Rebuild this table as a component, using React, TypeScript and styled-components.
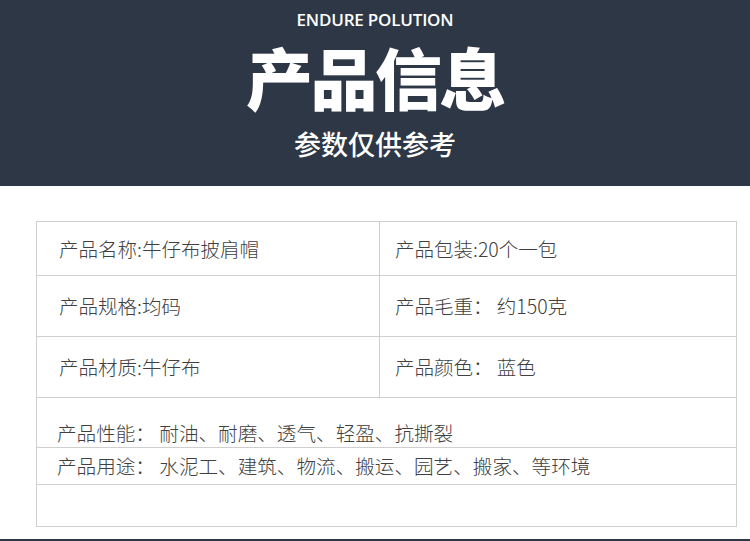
import React from "react";
import styled, { createGlobalStyle } from "styled-components";

const Global = createGlobalStyle`
  html, body { margin: 0; padding: 0; background: #ffffff; }
  body { font-family: "Noto Sans CJK SC", "Noto Sans", sans-serif; }
`;

const Page = styled.div`
  width: 750px;
  height: 541px;
  overflow: hidden;
  display: flex;
  flex-direction: column;
`;

const Header = styled.header`
  height: 186px;
  background: #2d3745;
  color: #ffffff;
  display: flex;
  flex-direction: column;
  align-items: center;
`;

const Eyebrow = styled.div`
  margin-top: 8px;
  font-family: "Open Sans", "Noto Sans", sans-serif;
  font-size: 17px;
  font-weight: 600;
  line-height: 24px;
  letter-spacing: -0.2px;
`;

const Title = styled.h1`
  margin: 10px 0 0;
  font-family: "Noto Sans CJK SC", sans-serif;
  font-size: 67px;
  font-weight: 900;
  line-height: 68px;
  letter-spacing: -2.5px;
`;

const Subtitle = styled.div`
  margin-top: 16px;
  font-family: "Noto Sans CJK SC", sans-serif;
  font-size: 27px;
  font-weight: 500;
  line-height: 36px;
`;

const Table = styled.div`
  margin: 35px 0 0 36px;
  width: 701px;
  box-sizing: border-box;
  border: 1px solid #cfcfcf;
  display: flex;
  flex-direction: column;
  color: #404040;
  font-weight: 300;
`;

const Row = styled.div<{ $h: number; $align?: string }>`
  height: ${(p) => p.$h}px;
  display: flex;
  align-items: ${(p) => p.$align || "center"};
  & + & { border-top: 1px solid #cfcfcf; }
`;

const Cell = styled.div<{ $w?: number; $pl: number }>`
  ${(p) => (p.$w ? `width: ${p.$w}px; flex: none;` : "flex: 1;")}
  height: 100%;
  box-sizing: border-box;
  display: flex;
  align-items: inherit;
  padding-left: ${(p) => p.$pl}px;
  font-size: 19.5px;
  line-height: 26px;
  white-space: pre;
  & + & { border-left: 1px solid #cfcfcf; }
`;

const Wide = styled.div<{ $pb?: number }>`
  flex: 1;
  padding-left: 20px;
  padding-bottom: ${(p) => p.$pb || 0}px;
  font-size: 19.6px;
  line-height: 26px;
  white-space: pre;
`;

const Footer = styled.div`
  margin-top: auto;
  height: 2px;
  background: #2d3745;
`;

const pairs: [string, string][] = [
  ["产品名称:牛仔布披肩帽", "产品包装:20个一包"],
  ["产品规格:均码", "产品毛重： 约150克"],
  ["产品材质:牛仔布", "产品颜色： 蓝色"],
];
const heights = [53, 60, 60];

export default function App() {
  return (
    <Page>
      <Global />
      <Header>
        <Eyebrow>ENDURE POLUTION</Eyebrow>
        <Title>产品信息</Title>
        <Subtitle>参数仅供参考</Subtitle>
      </Header>
      <Table>
        {pairs.map(([a, b], i) => (
          <Row key={i} $h={heights[i]}>
            <Cell $w={342} $pl={22}>{a}</Cell>
            <Cell $pl={15}>{b}</Cell>
          </Row>
        ))}
        <Row $h={49} $align="flex-end">
          <Wide $pb={1}>{"产品性能： 耐油、耐磨、透气、轻盈、抗撕裂"}</Wide>
        </Row>
        <Row $h={36}>
          <Wide>{"产品用途： 水泥工、建筑、物流、搬运、园艺、搬家、等环境"}</Wide>
        </Row>
        <Row $h={41} />
      </Table>
      <Footer />
    </Page>
  );
}
